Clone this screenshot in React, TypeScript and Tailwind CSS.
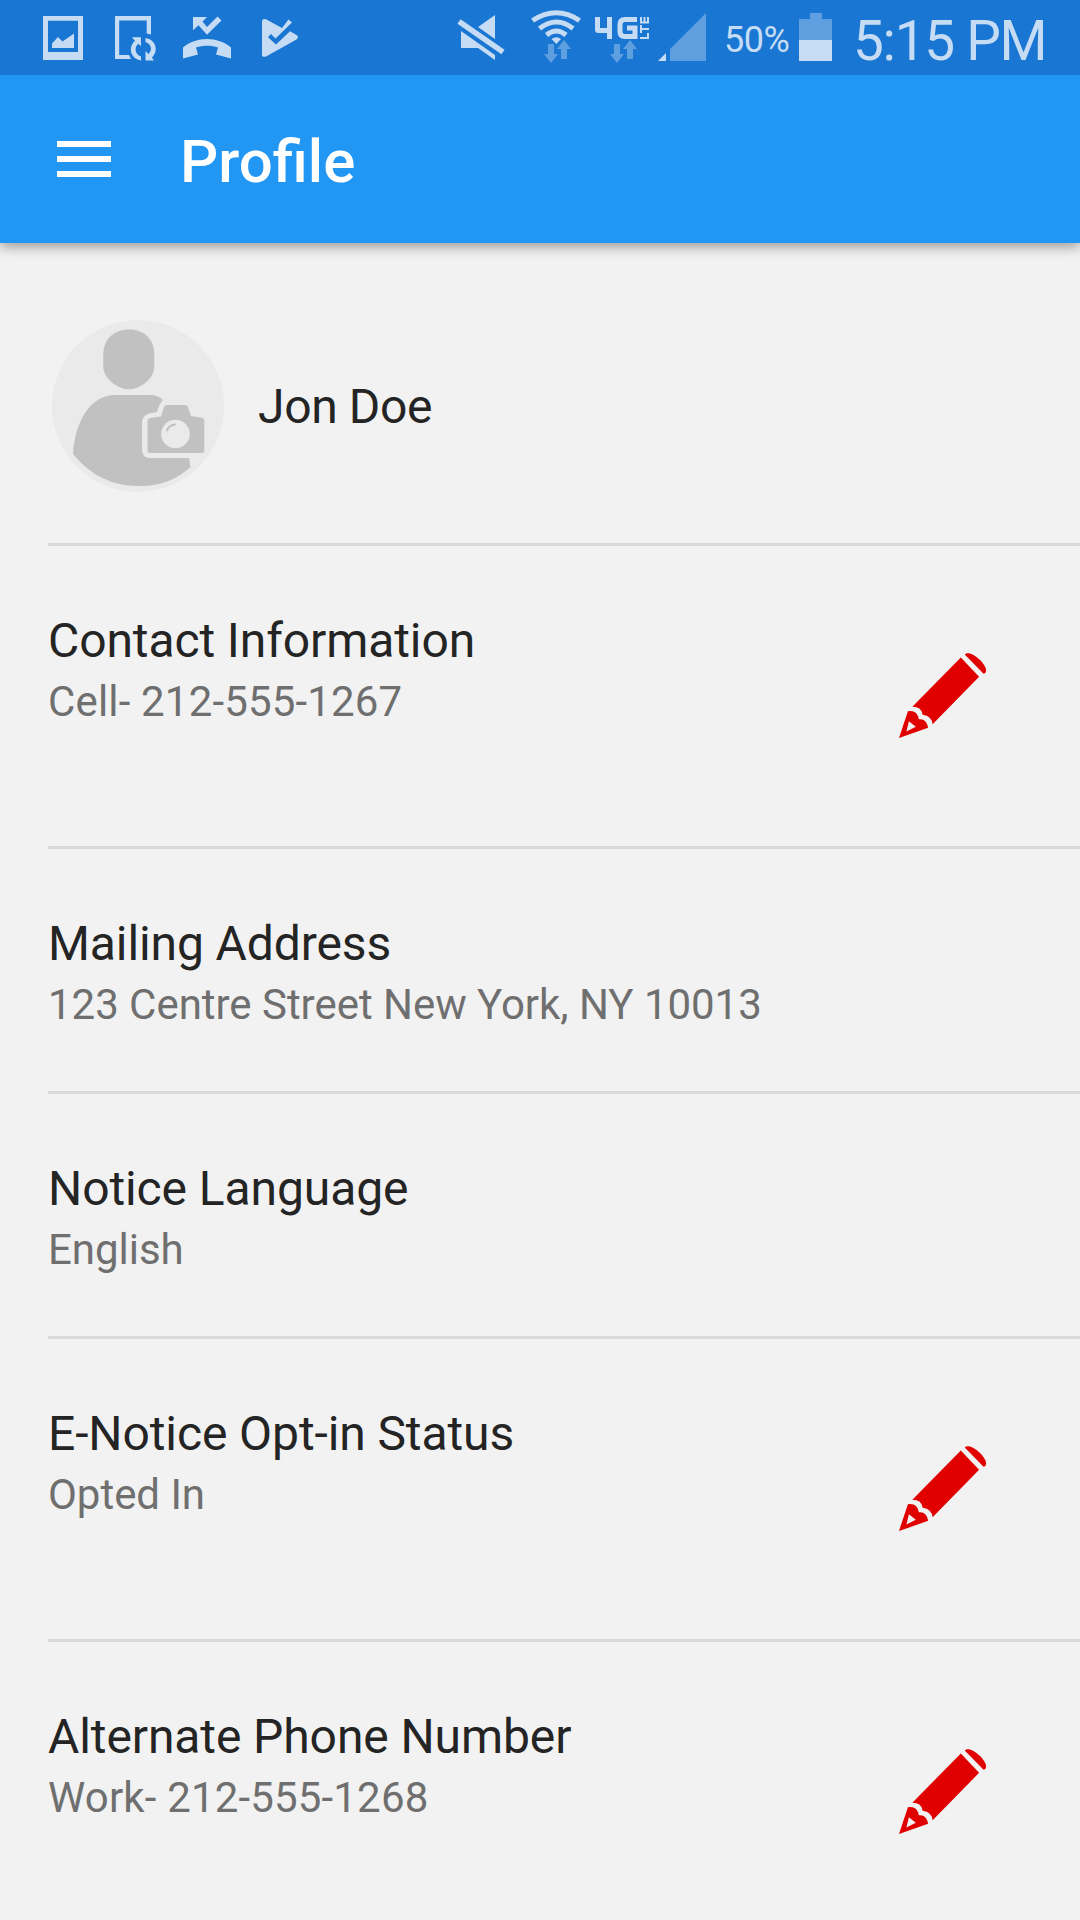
import React from 'react'

type Row = {
    title: string
    value: string
    editable: boolean
}

const rows: Row[] = [
    { title: 'Contact Information', value: 'Cell- 212-555-1267', editable: true },
    { title: 'Mailing Address', value: '123 Centre Street New York, NY 10013', editable: false },
    { title: 'Notice Language', value: 'English', editable: false },
    { title: 'E-Notice Opt-in Status', value: 'Opted In', editable: true },
    { title: 'Alternate Phone Number', value: 'Work- 212-555-1268', editable: true },
]

// left group of the status bar: gallery, sync, missed call, play
const NotificationIcons = () => (
    <svg className="block h-[75px] w-[270px] shrink-0" viewBox="30 0 270 75" fill="#c5dcf4">
        <path fillRule="evenodd" d="M43 16h40v44H43zM48 20.700h30V52H48z" />
        <path d="M52 48v-4.500l6-6.500 4.500 4.500L74 33.500V48z" />
        <g>
            <path d="M115 16h36v18.500l-4.300-1V20.500h-27.500V55H129l2 4h-16z" />
            <path d="M141 60.500c-11-2-13-14-6-19.500l-3-3.700h9v9l-2.700-2.600c-5 4.500-2.500 11.300 2.700 12.800z" />
            <path d="M145.500 38c10.500 1.500 13.500 13 6.500 19.500l2 3h-8.500v-9.500l3 3c4.500-4.500 2.500-10-3-12z" />
        </g>
        <path d="M193 17h14l-4.500 4.500 4.500 5.500 10.500-10.500 4 4L207 34.700l-8.500-9.500-5.500 5z" />
        <path d="M183 47.500c13-11.500 35-11.500 48 0v11l-15-4 2-7c-7-2.300-15-2.300-22 0l2 7-15 4z" />
        {/* triangle split by the check, whose tail sticks out at the top */}
        <path d="M262 21q.8-3 4-1.700L282 28l6.500-8.500 3.500 3L275.500 38.500l-4.500-4.500-3 3.200 8 7.300L290 31.300l6.500 3.700q3 2 0 4.500l-30.500 17q-3.500 1-4-1z" />
    </svg>
)

// mute, wifi, 4G LTE and signal strength
const NetworkIcons = () => (
    <svg className="block h-[75px] w-[256px] shrink-0" viewBox="456 0 256 75" fill="#c5dcf4">
        <path d="M495 15v24l-17-12zM461 31l34 24v5l-17-12h-17z" />
        <path d="M459 21.500L503 52" stroke="#c5dcf4" strokeWidth="5.500" fill="none" />
        <g fill="none" stroke="#c5dcf4" strokeWidth="5">
            <path d="M532.500 20.500q24-15.500 47 0" />
            <path d="M539.500 28.500q17-13 33.500 0" />
            <path d="M546.500 35q10-8 19.500 0" />
        </g>
        <path d="M551.500 39q5-3.500 9.500 0l-4.700 5z" />
        <path fill="#5e9fe0" d="M548 44h6v10h4l-7 9-7-9h4zM561 59V49h-4l7-9 7 9h-4v10z" />
        <g fill="none" stroke="#c5dcf4" strokeWidth="5">
            <path d="M597.500 17v12.500q0 1 1 1h11M609.500 17v22" />
            <path d="M637 19.500h-12q-5 0-5 5v7q0 5 5 5h10V28h-8" />
        </g>
        <g fill="none" stroke="#c5dcf4" strokeWidth="2">
            <path d="M640 38h8v-5M640 29h9M641 25v8M648 17v5.500h-7V17M644.500 17v5" />
        </g>
        <path fill="#5e9fe0" d="M614 44h6v10h4l-7 9-7-9h4zM627 59V49h-4l7-9 7 9h-4v10z" />
        <path fill="#5e9fe0" d="M670 49l36-36v48h-36z" />
        <path d="M658 61l8-8v8z" />
    </svg>
)

const Battery = () => (
    <div className="ml-[10px] flex w-[33px] flex-col items-center">
        <div className="h-[6px] w-3 bg-[#5e9fe0]" />
        <div className="h-[21px] w-full bg-[#5e9fe0]" />
        <div className="h-[21px] w-full bg-[#c5dcf4]" />
    </div>
)

const StatusBar = () => (
    <div className="relative z-20 flex h-[75px] shrink-0 items-center bg-[#1976d2] text-[#c5dcf4]">
        <div className="ml-[30px] flex">
            <NotificationIcons />
        </div>
        <div className="ml-auto flex items-center">
            <NetworkIcons />
            <span className="ml-[12px] mt-[5px] w-[65px] whitespace-nowrap text-[36px] leading-[42px] tracking-[-0.5px]">50%</span>
            <div className="-mt-[2px]">
                <Battery />
            </div>
            <span className="ml-[21px] mt-[6px] w-[227px] whitespace-nowrap text-[55px] font-[380] leading-[64px] tracking-[-1.3px]">5:15 PM</span>
        </div>
    </div>
)

const Avatar = () => (
    <svg className="block size-[172px]" viewBox="0 0 172 172">
        <circle cx="86" cy="86" r="86" fill="#eaeaea" />
        <g fill="#c1c1c1">
            <path d="M51.300 34.500C51.300 19 62 9.500 77 9.500s25.300 9.500 25.300 25v12C102.300 58 89 69.300 77 69.300S51.300 58 51.300 46.500z" />
            <path d="M21 134C23 102 38 75 63 75h37q6 .5 11 5-4.500 5-6 12l-8 1.500Q90 96 90 103v26q0 9 8 9h39l1.500 9Q117 167 86 166 47 166 21 134z" />
            <path d="M95.500 101q0-2.500 2.500-3l11-1.500 3-9.500q.8-2 3-2h18q2 0 2.800 2l3.200 9 11 1.800q2.300.5 2.300 3V131q0 2-2 2H97.500q-2 0-2-2z" />
        </g>
        <circle cx="123.500" cy="114" r="14.300" fill="#eaeaea" />
        <path d="M115 110.500q1.500-5 8-6" fill="none" stroke="#c1c1c1" strokeWidth="2" strokeLinecap="round" />
    </svg>
)

const Pencil = () => (
    <svg className="block h-[88px] w-[88px]" viewBox="0 0 89 87" preserveAspectRatio="none" fill="#e00000">
        <path d="M66.500 3.500C72-3 93 16 87 22l-1.500.5z" />
        <path d="M62.500 6.500L81 25.500 34 72.500Q33 64 24 63q-1-8-10.500-8z" />
        <path fillRule="evenodd" d="M0 86l9-26.500q9.500-1.500 11 8 8-1 9.500 8.500zM7.500 79.500l9.500-4.500-7-5.500z" />
    </svg>
)

const App = () => {
    return (
        <main className="flex h-[1920px] w-[1080px] flex-col overflow-hidden bg-[#f2f2f2] font-['Roboto',sans-serif] text-[#242424]">
            <StatusBar />
            <header className="relative z-10 flex h-[168px] shrink-0 items-center bg-[#2196f3] pl-[57px] shadow-[0_4px_12px_rgba(0,0,0,0.36)]">
                <button className="flex w-[54px] flex-col gap-[9px]" aria-label="Menu">
                    <span className="h-[6px] w-full bg-white" />
                    <span className="h-[6px] w-full bg-white" />
                    <span className="h-[6px] w-full bg-white" />
                </button>
                <h1 className="ml-[69px] mt-[5px] text-[60px] font-medium leading-[70px] text-white">Profile</h1>
            </header>

            <section className="ml-[48px] flex h-[303px] shrink-0 items-center border-b-[3px] border-[#d9d9d9] pl-1 pt-[25px] text-[48px]">
                <Avatar />
                <span className="ml-[34px] mt-[3px] leading-[56px] tracking-[-0.35px]">Jon Doe</span>
            </section>

            {rows.map((row) => (
                <section
                    key={row.title}
                    className={`ml-[48px] flex shrink-0 justify-between border-b-[3px] border-[#d9d9d9] pr-[93px] ${row.editable ? 'h-[303px]' : 'h-[245px]'}`}
                >
                    <div className="pt-[67px]">
                        <h2 className="text-[48px] leading-[56px] tracking-[-0.1px]">{row.title}</h2>
                        <p className={`mt-[8px] text-[42px] leading-[49px] text-[#6f6f6f] ${row.value.includes('555') ? 'tracking-[0.17px]' : 'tracking-[-0.03px]'}`}>
                            {row.value}
                        </p>
                    </div>
                    {row.editable && (
                        <button className="-mt-[2px] self-center" aria-label="Edit">
                            <Pencil />
                        </button>
                    )}
                </section>
            ))}
        </main>
    )
}

export default App
